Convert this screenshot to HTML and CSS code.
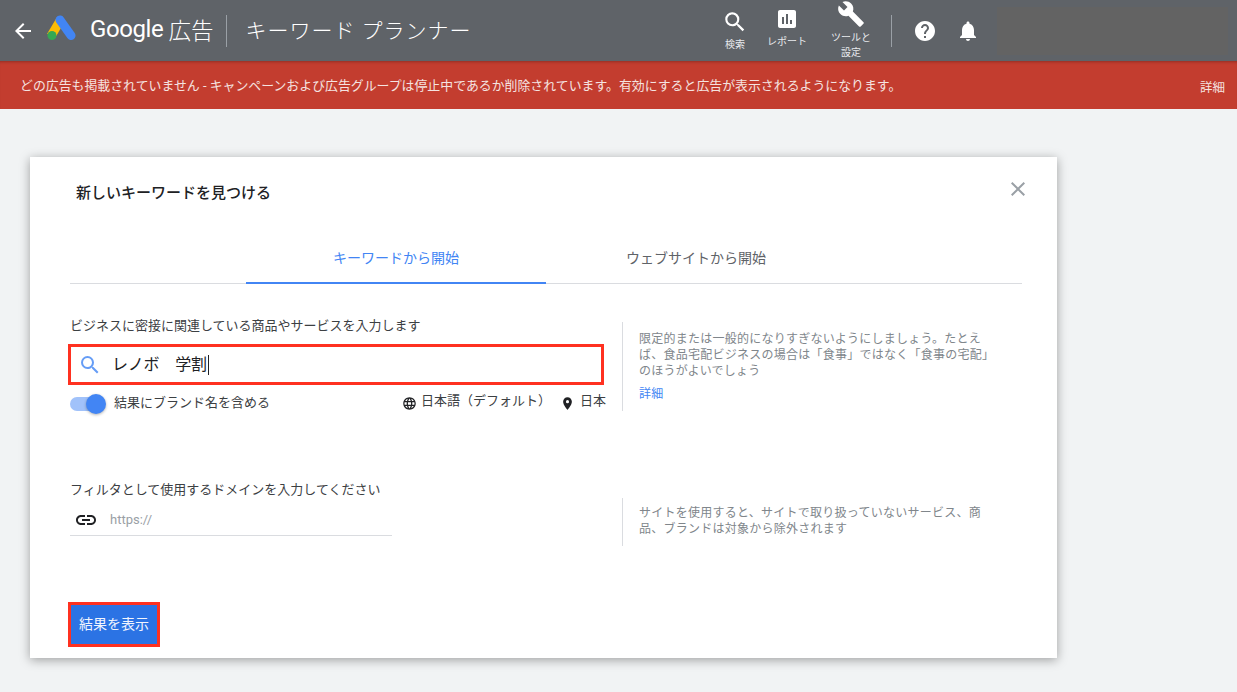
FILE: index.html
```html
<!DOCTYPE html>
<html lang="ja">
<head>
    <meta charset="UTF-8">
    <meta name="viewport" content="width=device-width, initial-scale=1.0">
    <title>キーワード プランナー</title>
    <link rel="stylesheet" href="styles.css">
</head>
<body>
    <header class="topbar">
        <svg class="back-icon" viewBox="0 0 24 24" width="24" height="24"><path fill="#fff" d="M20 11H7.830l5.590-5.590L12 4l-8 8 8 8 1.410-1.410L7.830 13H20z"/></svg>
        <svg class="ads-logo" viewBox="0 0 29 25" width="29" height="25">
            <path fill="none" stroke="#fbbc04" stroke-width="9" d="M13.500 5 4 21"/>
            <path fill="none" stroke="#4285f4" stroke-width="9" stroke-linecap="round" d="M13 5l11 15.500"/>
            <circle fill="#34a853" cx="5" cy="20.500" r="4.500"/>
        </svg>
        <span class="brand-google">Google</span>
        <span class="brand-ads">広告</span>
        <span class="title-divider"></span>
        <span class="page-title">キーワード プランナー</span>

        <nav class="top-nav">
            <div class="nav-item nav-search">
                <svg viewBox="0 0 24 24" width="26" height="26"><path fill="#fff" d="M15.500 14h-.79l-.28-.27A6.470 6.470 0 0 0 16 9.500 6.500 6.500 0 1 0 9.500 16c1.610 0 3.090-.59 4.230-1.570l.27.28v.79l5 4.990L20.490 19l-4.990-5zm-6 0C7.010 14 5 11.990 5 9.500S7.010 5 9.500 5 14 7.010 14 9.500 11.990 14 9.500 14z"/></svg>
                <span>検索</span>
            </div>
            <div class="nav-item nav-report">
                <svg viewBox="0 0 24 24" width="24" height="24"><path fill="#fff" d="M19 3H5c-1.100 0-2 .9-2 2v14c0 1.100.9 2 2 2h14c1.100 0 2-.9 2-2V5c0-1.100-.9-2-2-2zM9 17H7v-7h2v7zm4 0h-2V7h2v10zm4 0h-2v-4h2v4z"/></svg>
                <span>レポート</span>
            </div>
            <div class="nav-item nav-tools">
                <svg viewBox="0 0 24 24" width="28" height="28"><path fill="#fff" d="M22.700 19l-9.100-9.100c.9-2.300.4-5-1.500-6.900-2-2-5-2.400-7.400-1.300L9 6 6 9 1.600 4.700C.4 7.100.9 10.100 2.900 12.100c1.900 1.900 4.600 2.400 6.900 1.500l9.100 9.100c.4.400 1 .4 1.400 0l2.300-2.300c.5-.4.500-1.100.1-1.400z"/></svg>
                <span>ツールと<br>設定</span>
            </div>
            <span class="nav-divider"></span>
            <svg class="nav-help" viewBox="0 0 24 24" width="24" height="24"><path fill="#fff" d="M12 2C6.480 2 2 6.480 2 12s4.480 10 10 10 10-4.480 10-10S17.520 2 12 2zm1 17h-2v-2h2v2zm2.070-7.750-.9.920C13.450 12.900 13 13.500 13 15h-2v-.5c0-1.100.45-2.100 1.170-2.830l1.240-1.260c.37-.36.590-.86.590-1.410 0-1.100-.9-2-2-2s-2 .9-2 2H8c0-2.210 1.790-4 4-4s4 1.790 4 4c0 .88-.36 1.680-.93 2.250z"/></svg>
            <svg class="nav-bell" viewBox="0 0 24 24" width="24" height="24"><path fill="#fff" d="M12 22c1.100 0 2-.9 2-2h-4c0 1.100.9 2 2 2zm6-6v-5c0-3.070-1.630-5.640-4.500-6.320V4c0-.83-.67-1.500-1.500-1.500s-1.500.67-1.500 1.500v.68C7.640 5.360 6 7.920 6 11v5l-2 2v1h16v-1l-2-2z"/></svg>
            <div class="account-box"></div>
        </nav>
    </header>

    <div class="alert-bar">
        <span>どの広告も掲載されていません - キャンペーンおよび広告グループは停止中であるか削除されています。有効にすると広告が表示されるようになります。</span>
        <span class="alert-link">詳細</span>
    </div>

    <main class="page">
        <section class="modal">
            <div class="modal-head">
                <h1>新しいキーワードを見つける</h1>
                <svg class="close-icon" viewBox="0 0 24 24" width="24" height="24"><path fill="#9aa0a6" d="M19 6.410 17.590 5 12 10.590 6.410 5 5 6.410 10.590 12 5 17.590 6.410 19 12 13.410 17.590 19 19 17.590 13.410 12z"/></svg>
            </div>

            <div class="tabs">
                <div class="tab active">キーワードから開始</div>
                <div class="tab">ウェブサイトから開始</div>
            </div>

            <div class="form-row row-keywords">
                <div class="form-main">
                    <label class="field-label">ビジネスに密接に関連している商品やサービスを入力します</label>
                    <div class="keyword-box">
                        <svg viewBox="0 0 24 24" width="24" height="24"><path fill="#669df6" d="M15.500 14h-.79l-.28-.27A6.470 6.470 0 0 0 16 9.500 6.500 6.500 0 1 0 9.500 16c1.610 0 3.090-.59 4.230-1.570l.27.28v.79l5 4.990L20.490 19l-4.990-5zm-6 0C7.010 14 5 11.990 5 9.500S7.010 5 9.500 5 14 7.010 14 9.500 11.990 14 9.500 14z"/></svg>
                        <span class="keyword-text">レノボ　学割</span>
                    </div>
                    <div class="options">
                        <div class="toggle"><span class="toggle-knob"></span></div>
                        <span class="toggle-label">結果にブランド名を含める</span>
                        <svg class="globe-icon" viewBox="0 0 24 24" width="15" height="15"><path fill="#202124" d="M11.990 2C6.470 2 2 6.480 2 12s4.470 10 9.990 10C17.520 22 22 17.520 22 12S17.520 2 11.990 2zm6.930 6h-2.950a15.650 15.650 0 0 0-1.380-3.560A8.030 8.030 0 0 1 18.920 8zM12 4.040c.83 1.200 1.480 2.530 1.910 3.960h-3.820c.43-1.430 1.080-2.760 1.910-3.960zM4.260 14C4.100 13.360 4 12.690 4 12s.1-1.360.26-2h3.380c-.08.66-.14 1.320-.14 2s.06 1.340.14 2H4.260zm.82 2h2.950c.32 1.250.78 2.450 1.380 3.560A7.987 7.987 0 0 1 5.080 16zm2.950-8H5.080a7.987 7.987 0 0 1 4.330-3.560A15.650 15.650 0 0 0 8.030 8zM12 19.960c-.83-1.200-1.480-2.530-1.910-3.960h3.820c-.43 1.430-1.080 2.760-1.910 3.960zM14.340 14H9.660c-.09-.66-.16-1.320-.16-2s.07-1.350.16-2h4.680c.09.65.16 1.320.16 2s-.07 1.340-.16 2zm.25 5.560c.6-1.110 1.060-2.310 1.380-3.560h2.950a8.030 8.030 0 0 1-4.330 3.560zM16.360 14c.08-.66.14-1.320.14-2s-.06-1.340-.14-2h3.380c.16.64.26 1.310.26 2s-.1 1.360-.26 2h-3.380z"/></svg>
                        <span class="option-text">日本語（デフォルト）</span>
                        <svg class="pin-icon" viewBox="0 0 24 24" width="15" height="15"><path fill="#202124" d="M12 2C8.130 2 5 5.130 5 9c0 5.250 7 13 7 13s7-7.750 7-13c0-3.870-3.130-7-7-7zm0 9.500a2.500 2.500 0 0 1 0-5 2.500 2.500 0 0 1 0 5z"/></svg>
                        <span class="option-text">日本</span>
                    </div>
                </div>
                <div class="form-help">
                    <p>限定的または一般的になりすぎないようにしましょう。たとえば、食品宅配ビジネスの場合は「食事」ではなく「食事の宅配」のほうがよいでしょう</p>
                    <a class="help-link">詳細</a>
                </div>
            </div>

            <div class="form-row row-domain">
                <div class="form-main">
                    <label class="field-label">フィルタとして使用するドメインを入力してください</label>
                    <div class="domain-box">
                        <svg viewBox="0 0 24 24" width="24" height="24"><path fill="#202124" d="M3.900 12c0-1.710 1.390-3.100 3.100-3.100h4V7H7c-2.760 0-5 2.240-5 5s2.240 5 5 5h4v-1.900H7c-1.710 0-3.100-1.390-3.100-3.100zM8 13h8v-2H8v2zm9-6h-4v1.900h4c1.710 0 3.100 1.390 3.100 3.100s-1.390 3.100-3.100 3.100h-4V17h4c2.760 0 5-2.240 5-5s-2.240-5-5-5z"/></svg>
                        <span>https://</span>
                    </div>
                </div>
                <div class="form-help help-domain">
                    <p>サイトを使用すると、サイトで取り扱っていないサービス、商品、ブランドは対象から除外されます</p>
                </div>
            </div>

            <button class="show-results">結果を表示</button>
        </section>
    </main>
</body>
</html>
```

FILE: styles.css
```css
* {
    box-sizing: border-box;
}

body {
    margin: 0;
    height: 692px;
    overflow: hidden;
    background-color: #f1f3f4;
    font-family: Roboto, "Noto Sans CJK JP", sans-serif;
    color: #3c4043;
}

.topbar {
    display: flex;
    align-items: center;
    height: 61px;
    padding-left: 11px;
    background-color: #5f6368;
    color: #fff;
}

.back-icon {
    margin-right: 12px;
}

.ads-logo {
    margin: 0 14px 6px 0;
}

.brand-google {
    font-size: 24px;
    letter-spacing: -0.4px;
    margin: 0 5px 4px 0;
}

.brand-ads {
    font-size: 22.500px;
    font-weight: 300;
    margin-bottom: 4px;
}

.title-divider {
    width: 1px;
    height: 32px;
    margin: 0 18px 0 13px;
    background-color: #9aa0a6;
}

.page-title {
    font-size: 21px;
    font-weight: 300;
    letter-spacing: 1px;
    margin-bottom: 4px;
}

.top-nav {
    display: flex;
    align-items: center;
    height: 61px;
    margin-left: auto;
    padding-right: 9px;
}

.nav-item {
    display: flex;
    flex-direction: column;
    align-items: center;
    font-size: 10px;
    line-height: 15px;
    text-align: center;
    color: #e8eaed;
}

.nav-item span {
    display: block;
    white-space: nowrap;
}

.nav-search {
    width: 40px;
    margin-right: 12px;
}

.nav-search span {
    margin-top: 2px;
}

.nav-report {
    width: 40px;
    margin-right: 24px;
    padding-bottom: 5px;
}

.nav-report span {
    margin-top: 3px;
}

.nav-tools {
    width: 40px;
    padding-bottom: 2px;
}

.nav-tools svg {
    margin-bottom: 2px;
}

.nav-divider {
    width: 1px;
    height: 32px;
    margin: 0 21px 0 20px;
    background-color: #9aa0a6;
}

.nav-help {
    margin-right: 19px;
}

.nav-bell {
    margin-right: 17px;
}

.account-box {
    width: 231px;
    height: 48px;
    background-color: #636363;
}

.alert-bar {
    display: flex;
    justify-content: space-between;
    align-items: center;
    height: 48px;
    padding: 0 12px 2px 20px;
    background-color: #c33d2f;
    box-shadow: inset 0 3px 3px -2px rgba(0, 0, 0, 0.25);
    color: #f5e3e0;
    font-size: 12.900px;
}

.alert-link {
    font-size: 12.500px;
    padding-top: 4px;
}

.page {
    padding: 48px 0 0 30px;
}

.modal {
    width: 1027px;
    height: 501px;
    padding: 0 35px 0 40px;
    background-color: #fff;
    box-shadow: 0 2px 10px rgba(0, 0, 0, 0.35);
}

.modal-head {
    display: flex;
    justify-content: space-between;
    align-items: center;
    height: 72px;
    padding: 0 0 4px 6px;
    margin-right: -8px;
}

.modal-head h1 {
    margin: 0;
    font-size: 15px;
    font-weight: 500;
    color: #202124;
}

.close-icon {
    width: 24px;
    height: 24px;
    margin-bottom: 4px;
}

.tabs {
    display: flex;
    justify-content: center;
    height: 55px;
    border-bottom: 1px solid #dadce0;
}

.tab {
    width: 300px;
    height: 55px;
    padding-top: 18px;
    text-align: center;
    font-size: 14px;
    color: #5f6368;
}

.tab.active {
    color: #4285f4;
    border-bottom: 2px solid #4285f4;
}

.form-row {
    display: flex;
}

.row-keywords {
    margin-top: 34px;
}

.row-domain {
    margin-top: 67px;
}

.form-main {
    width: 536px;
}

.field-label {
    display: block;
    font-size: 13px;
    line-height: 16px;
    color: #3c4043;
}

.keyword-box {
    display: flex;
    align-items: center;
    width: 536px;
    height: 41px;
    margin: 10px 0 0 -2px;
    padding-left: 7px;
    border: 3px solid #ff3120;
    font-size: 16px;
    color: #202124;
}

.keyword-text {
    margin-left: 10px;
    padding-right: 1px;
    border-right: 1px solid #202124;
    line-height: 20px;
    letter-spacing: -0.2px;
}

.options {
    display: flex;
    align-items: center;
    height: 22px;
    margin-top: 8px;
    font-size: 13px;
    color: #3c4043;
}

.toggle {
    position: relative;
    width: 34px;
    height: 14px;
    border-radius: 7px;
    background-color: #a1c2fa;
}

.toggle-knob {
    position: absolute;
    top: -3px;
    right: -2px;
    width: 20px;
    height: 20px;
    border-radius: 50%;
    background-color: #4285f4;
    box-shadow: 0 1px 3px rgba(0, 0, 0, 0.3);
}

.toggle-label {
    margin-left: 10px;
    padding-bottom: 6px;
}

.globe-icon {
    margin: 0 4px 2px auto;
}

.pin-icon {
    margin: 0 5px 2px 9px;
}

.option-text {
    padding-bottom: 9px;
}

.form-help {
    width: 400px;
    height: 89px;
    margin: 4px 0 0 16px;
    padding: 9px 0 0 16px;
    border-left: 1px solid #dadce0;
    font-size: 12px;
    letter-spacing: 0.25px;
    line-height: 16px;
    color: #80868b;
}

.form-help p {
    width: 358px;
    margin: 0;
}

.help-link {
    display: block;
    margin-top: 7px;
    color: #4285f4;
}

.help-domain {
    height: 48px;
    margin-top: 16px;
    padding-top: 7px;
}

.domain-box {
    display: flex;
    align-items: center;
    width: 322px;
    height: 32px;
    margin-top: 6px;
    padding-left: 4px;
    border-bottom: 1px solid #dadce0;
    font-size: 13px;
    color: #9aa0a6;
}

.domain-box svg {
    margin-right: 12px;
}

.show-results {
    display: block;
    width: 92px;
    height: 45px;
    margin: 56px 0 0 -2px;
    padding: 0 0 4px;
    border: 3px solid #ff3120;
    background-color: #2b73e4;
    color: #f1f5fe;
    font-family: inherit;
    font-size: 14px;
}
```
